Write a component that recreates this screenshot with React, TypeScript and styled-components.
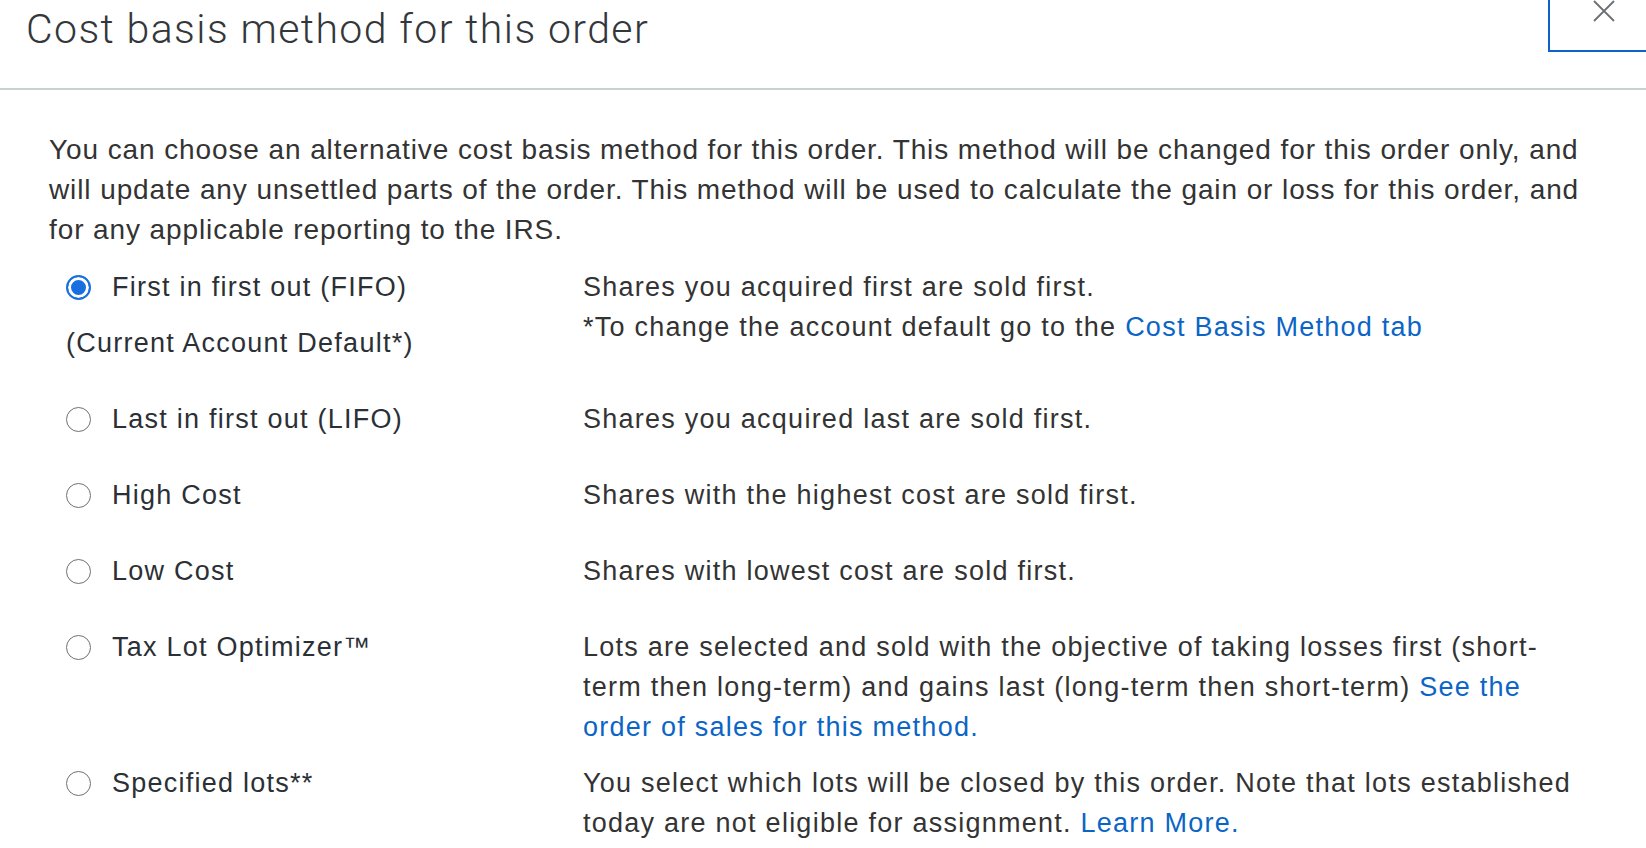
import styled, { createGlobalStyle } from 'styled-components'

const GlobalStyle = createGlobalStyle`
  html, body {
    margin: 0;
    padding: 0;
    background: #fff;
    overflow: hidden;
  }
  body {
    font-family: "Liberation Sans", Arial, sans-serif;
    color: #333;
  }
`

const Modal = styled.div`
  width: 1646px;
  height: 848px;
  overflow: hidden;
  background: #fff;
`

const Header = styled.div`
  display: flex;
  justify-content: space-between;
  align-items: flex-start;
  height: 90px;
  border-bottom: 2px solid #cbd0d3;
  box-sizing: border-box;
`

const Title = styled.h2`
  margin: 0;
  padding: 5px 0 0 26px;
  font-family: Roboto, "Liberation Sans", sans-serif;
  font-weight: 300;
  font-size: 41px;
  line-height: 48px;
  letter-spacing: 1.4px;
  color: #33373b;
`

const CloseButton = styled.button`
  display: flex;
  justify-content: center;
  align-items: flex-start;
  width: 112px;
  height: 74px;
  margin-top: -22px;
  margin-right: -14px;
  padding: 19px 0 0;
  background: #fff;
  border: 2px solid #0b63c4;
  box-sizing: border-box;
  cursor: pointer;
`

const Body = styled.div`
  padding: 40px 46px 0 49px;
`

const Intro = styled.p`
  margin: 0 0 17px;
  font-size: 28px;
  line-height: 40px;
  letter-spacing: 0.9px;
  color: #333;
`

const Options = styled.div`
  display: flex;
  flex-direction: column;
  gap: 16px;
`

const Row = styled.div`
  display: grid;
  grid-template-columns: 534px 1000px;
  font-size: 27px;
  line-height: 40px;
  letter-spacing: 1.25px;
`

const Left = styled.div`
  padding-left: 17px;
  padding-bottom: 20px;
`

const RadioLabel = styled.label`
  display: flex;
  align-items: center;
  gap: 21px;
  color: #2b3036;
  cursor: pointer;
`

const Radio = styled.span<{ $checked?: boolean }>`
  flex: none;
  width: 25px;
  height: 25px;
  border-radius: 50%;
  box-sizing: border-box;
  border: ${p => (p.$checked ? '2.5px solid #1a6fe0' : '1.5px solid #707070')};
  background: ${p => (p.$checked ? '#1a6fe0' : '#fff')};
  box-shadow: ${p => (p.$checked ? 'inset 0 0 0 3px #fff' : 'none')};
`

const Sub = styled.div`
  margin-top: 16px;
  color: #2b3036;
`

const Desc = styled.div`
  color: #333;
`

const Link = styled.a`
  color: #0b65c6;
  text-decoration: none;
  cursor: pointer;
`

type Option = {
  label: string
  sub?: string
  desc: React.ReactNode
  checked?: boolean
}

const options: Option[] = [
  {
    label: 'First in first out (FIFO)',
    sub: '(Current Account Default*)',
    checked: true,
    desc: (
      <>
        Shares you acquired first are sold first.
        <br />
        *To change the account default go to the <Link>Cost Basis Method tab</Link>
      </>
    ),
  },
  { label: 'Last in first out (LIFO)', desc: 'Shares you acquired last are sold first.' },
  { label: 'High Cost', desc: 'Shares with the highest cost are sold first.' },
  { label: 'Low Cost', desc: 'Shares with lowest cost are sold first.' },
  {
    label: 'Tax Lot Optimizer™',
    desc: (
      <>
        Lots are selected and sold with the objective of taking losses first (short-term then
        long-term) and gains last (long-term then short-term){' '}
        <Link>See the order of sales for this method.</Link>
      </>
    ),
  },
  {
    label: 'Specified lots**',
    desc: (
      <>
        You select which lots will be closed by this order. Note that lots established today are
        not eligible for assignment. <Link>Learn More.</Link>
      </>
    ),
  },
]

function App() {
  return (
    <Modal>
      <GlobalStyle />
      <Header>
        <Title>Cost basis method for this order</Title>
        <CloseButton aria-label="Close">
          <svg width="24" height="24" viewBox="0 0 24 24" fill="none" stroke="#6b7074" strokeWidth="1.8">
            <path d="M2 2 L22 22 M22 2 L2 22" />
          </svg>
        </CloseButton>
      </Header>
      <Body>
        <Intro>
          You can choose an alternative cost basis method for this order. This method will be
          changed for this order only, and will update any unsettled parts of the order. This
          method will be used to calculate the gain or loss for this order, and for any applicable
          reporting to the IRS.
        </Intro>
        <Options>
          {options.map(o => (
            <Row key={o.label}>
              <Left>
                <RadioLabel>
                  <Radio $checked={o.checked} />
                  {o.label}
                </RadioLabel>
                {o.sub && <Sub>{o.sub}</Sub>}
              </Left>
              <Desc>{o.desc}</Desc>
            </Row>
          ))}
        </Options>
      </Body>
    </Modal>
  )
}

export default App
